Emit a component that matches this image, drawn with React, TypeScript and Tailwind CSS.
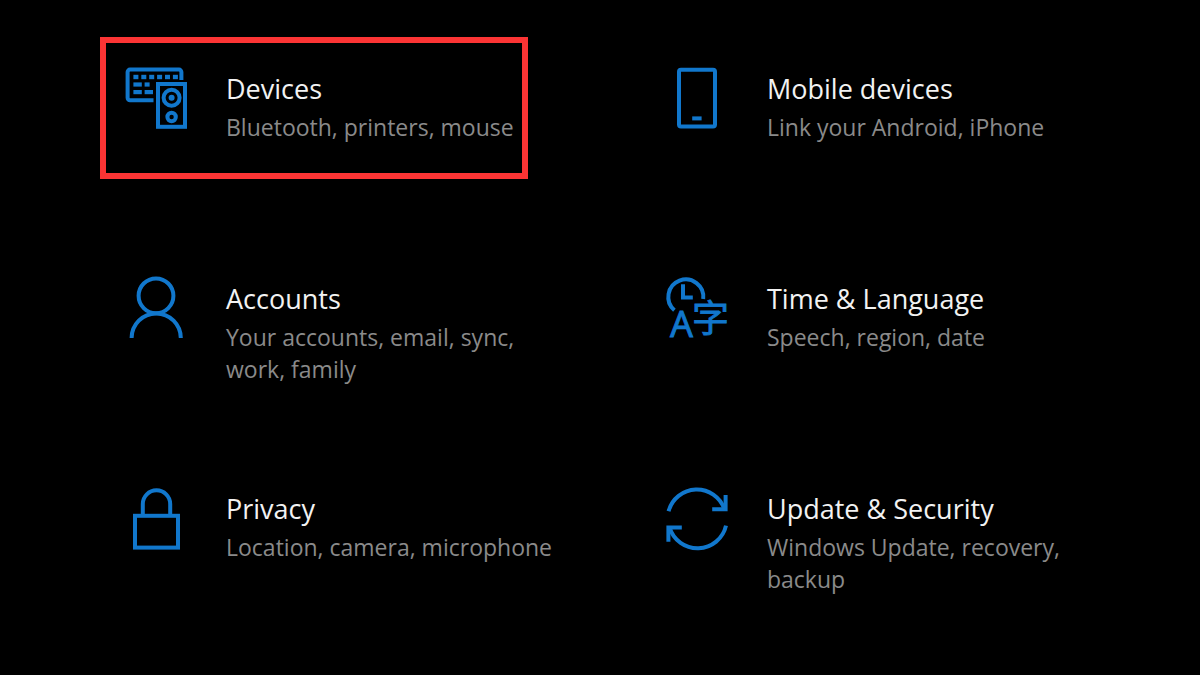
import type { ReactNode } from "react";
import { clsx } from "clsx";

type Category = {
  title: string;
  description: string;
  href: string;
  icon: ReactNode;
  highlighted?: boolean;
};

function Icon({ children }: { children: ReactNode }) {
  return (
    <svg
      viewBox="0 0 64 64"
      fill="none"
      stroke="currentColor"
      strokeWidth="4"
      aria-hidden="true"
      className="h-16 w-16 shrink-0 overflow-visible text-[#1177cc]"
    >
      {children}
    </svg>
  );
}

const DevicesIcon = () => (
  <Icon>
    <path d="M29.5 35.2H6a2.4 2.4 0 0 1-2.4-2.4V7A2.4 2.4 0 0 1 6 4.6h49a2.4 2.4 0 0 1 2.4 2.4v8" />
    <g fill="currentColor" stroke="none">
      <rect x="9.4" y="9.8" width="5" height="4.4" />
      <rect x="17.3" y="9.8" width="5" height="4.4" />
      <rect x="25.2" y="9.8" width="5" height="4.4" />
      <rect x="33.1" y="9.8" width="5" height="4.4" />
      <rect x="41" y="9.8" width="5" height="4.4" />
      <rect x="48.9" y="9.8" width="5" height="4.4" />
      <rect x="9.4" y="17.4" width="8.4" height="4.2" />
      <rect x="20.6" y="17.4" width="5" height="4.2" />
      <rect x="9.4" y="25" width="8.4" height="4.2" />
      <rect x="20.6" y="25" width="8.4" height="4.2" />
      <circle cx="47.6" cy="32.8" r="3" />
    </g>
    <rect x="34" y="19" width="27" height="42.8" />
    <circle cx="47.6" cy="32.8" r="8" />
    <circle cx="47.6" cy="52" r="4.2" />
  </Icon>
);

const MobileIcon = () => (
  <Icon>
    <rect x="14" y="4.8" width="36" height="56.6" rx="2" />
    <path d="M27.2 53.4h9.4" />
  </Icon>
);

const AccountsIcon = () => (
  <Icon>
    <circle cx="32" cy="20.8" r="17.4" />
    <path d="M7.6 63a24.6 24.6 0 0 1 49.2 0" />
  </Icon>
);

const LanguageIcon = () => (
  <Icon>
    <path d="M9.4 35.2A17.5 17.5 0 1 1 38.2 24" />
    <path d="M18 9.2v13.4h9.8" />
    <g fill="currentColor" strokeWidth="0.8">
      <text x="5" y="62" className="font-['Noto_Sans',sans-serif] text-[36px]">
        A
      </text>
      <text x="27" y="57" className="font-['Noto_Sans_CJK_SC',sans-serif] text-[37px]">
        字
      </text>
    </g>
  </Icon>
);

const PrivacyIcon = () => (
  <Icon>
    <rect x="11" y="30.8" width="43" height="31.8" />
    <path d="M18.8 30V19a13.7 13.7 0 0 1 27.4 0v11" />
  </Icon>
);

const UpdateIcon = () => (
  <Icon>
    <path d="M3.6 26.2A29.2 29.2 0 0 1 59.4 24.2" />
    <path d="M60.6 10v14.2H47.2" />
    <path d="M61 40.6A29.2 29.2 0 0 1 4.6 42.6" />
    <path d="M3.4 56.8V42.6h13.4" />
  </Icon>
);

const categories: Category[] = [
  {
    title: "Devices",
    description: "Bluetooth, printers, mouse",
    href: "#devices",
    icon: <DevicesIcon />,
    highlighted: true,
  },
  {
    title: "Mobile devices",
    description: "Link your Android, iPhone",
    href: "#mobile-devices",
    icon: <MobileIcon />,
  },
  {
    title: "Accounts",
    description: "Your accounts, email, sync, work, family",
    href: "#accounts",
    icon: <AccountsIcon />,
  },
  {
    title: "Time & Language",
    description: "Speech, region, date",
    href: "#time-language",
    icon: <LanguageIcon />,
  },
  {
    title: "Privacy",
    description: "Location, camera, microphone",
    href: "#privacy",
    icon: <PrivacyIcon />,
  },
  {
    title: "Update & Security",
    description: "Windows Update, recovery, backup",
    href: "#update-security",
    icon: <UpdateIcon />,
  },
];

function CategoryLink({ title, description, href, icon, highlighted }: Category) {
  return (
    <a
      href={href}
      className={clsx(
        "flex min-h-[142px] items-start gap-[38px] pt-[22px] pl-[18px]",
        highlighted
          ? "max-w-[428px] border-6 border-[#fb3434]"
          : "max-w-[464px] border-x-6 border-t-6 border-transparent"
      )}
    >
      {icon}
      <div className="min-w-0 pt-0.5">
        <h2 className="text-[27px] leading-[44px] text-[#f2f2f2]">{title}</h2>
        <p className="text-[23px] leading-8 text-[#8a8a8a]">{description}</p>
      </div>
    </a>
  );
}

export default function App() {
  return (
    <main className="min-h-screen bg-black pt-[37px] pr-[18px] pl-[100px] font-['Open_Sans','Noto_Sans',sans-serif]">
      <nav aria-label="Settings" className="grid grid-cols-2 gap-y-[68px]">
        {categories.map((category) => (
          <CategoryLink key={category.title} {...category} />
        ))}
      </nav>
    </main>
  );
}
